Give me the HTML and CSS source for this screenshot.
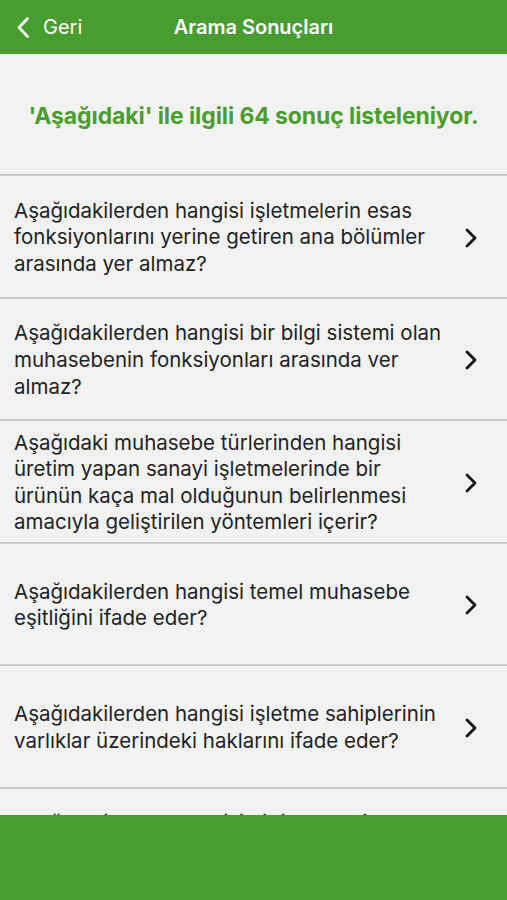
FILE: index.html
```html
<!DOCTYPE html>
<html lang="tr">
<head>
<meta charset="utf-8">
<title>Arama Sonuçları</title>
<link rel="stylesheet" href="styles.css">
</head>
<body>
<div class="screen">
  <header class="navbar">
    <a class="back">
      <svg class="back-icon" viewBox="0 0 12 21" width="12" height="21"><path d="M10.5 1.5 L2 10.5 L10.5 19.5" fill="none" stroke="#fff" stroke-width="2.6" stroke-linecap="round" stroke-linejoin="round"/></svg>
      <span>Geri</span>
    </a>
    <h1 class="title">Arama Sonuçları</h1>
  </header>
  <main class="content">
    <div class="banner">'Aşağıdaki' ile ilgili 64 sonuç listeleniyor.</div>
    <ul class="list">
      <li class="row"><p class="q">Aşağıdakilerden hangisi işletmelerin esas fonksiyonlarını yerine getiren ana bölümler arasında yer almaz?</p><svg class="chev" viewBox="0 0 12 20" width="12" height="20"><path d="M2 2 L10 10 L2 18" fill="none" stroke="#111" stroke-width="2.8" stroke-linecap="round" stroke-linejoin="round"/></svg></li>
      <li class="row"><p class="q">Aşağıdakilerden hangisi bir bilgi sistemi olan muhasebenin fonksiyonları arasında ver almaz?</p><svg class="chev" viewBox="0 0 12 20" width="12" height="20"><path d="M2 2 L10 10 L2 18" fill="none" stroke="#111" stroke-width="2.8" stroke-linecap="round" stroke-linejoin="round"/></svg></li>
      <li class="row"><p class="q">Aşağıdaki muhasebe türlerinden hangisi üretim yapan sanayi işletmelerinde bir ürünün kaça mal olduğunun belirlenmesi amacıyla geliştirilen yöntemleri içerir?</p><svg class="chev" viewBox="0 0 12 20" width="12" height="20"><path d="M2 2 L10 10 L2 18" fill="none" stroke="#111" stroke-width="2.8" stroke-linecap="round" stroke-linejoin="round"/></svg></li>
      <li class="row"><p class="q">Aşağıdakilerden hangisi temel muhasebe eşitliğini ifade eder?</p><svg class="chev" viewBox="0 0 12 20" width="12" height="20"><path d="M2 2 L10 10 L2 18" fill="none" stroke="#111" stroke-width="2.8" stroke-linecap="round" stroke-linejoin="round"/></svg></li>
      <li class="row"><p class="q">Aşağıdakilerden hangisi işletme sahiplerinin varlıklar üzerindeki haklarını ifade eder?</p><svg class="chev" viewBox="0 0 12 20" width="12" height="20"><path d="M2 2 L10 10 L2 18" fill="none" stroke="#111" stroke-width="2.8" stroke-linecap="round" stroke-linejoin="round"/></svg></li>
      <li class="row"><p class="q">Aşağıdakilerden hangisi bir işletmenin tekdüzen hesap planında yer alan hesap sınıflarından biri değildir?</p><svg class="chev" viewBox="0 0 12 20" width="12" height="20"><path d="M2 2 L10 10 L2 18" fill="none" stroke="#111" stroke-width="2.8" stroke-linecap="round" stroke-linejoin="round"/></svg></li>
    </ul>
  </main>
  <footer class="tabbar"></footer>
</div>
</body>
</html>
```

FILE: styles.css
```css
* { box-sizing: border-box; }
html, body { margin: 0; padding: 0; }
body {
  font-family: "Inter", "Liberation Sans", Arial, sans-serif;
  background: #f2f2f2;
}
.screen {
  width: 507px;
  height: 900px;
  display: flex;
  flex-direction: column;
  overflow: hidden;
}
.navbar {
  height: 54px;
  flex: 0 0 54px;
  background: #499c30;
  display: flex;
  align-items: center;
  position: relative;
  color: #fff;
}
.back {
  display: flex;
  align-items: center;
  gap: 14px;
  padding-left: 17px;
  font-size: 20px;
  color: #fff;
}
.back-icon { display: block; }
.title {
  position: absolute;
  left: 0;
  right: 0;
  top: 0;
  height: 54px;
  line-height: 54px;
  margin: 0;
  text-align: center;
  font-size: 20px;
  font-weight: 600;
  pointer-events: none;
}
.content {
  flex: 1 1 auto;
  overflow: hidden;
}
.banner {
  height: 122px;
  border-bottom: 2px solid #c9c9c9;
  display: flex;
  align-items: center;
  justify-content: center;
  padding-top: 4px;
  color: #4a9e2f;
  font-weight: 700;
  font-size: 23px;
  letter-spacing: -0.1px;
}
.list { list-style: none; margin: 0; padding: 0; }
.row {
  height: 122.5px;
  border-bottom: 2px solid #cccccc;
  display: flex;
  align-items: center;
  padding: 3px 30px 0 14px;
}
.q {
  flex: 1;
  margin: 0;
  font-size: 20.5px;
  line-height: 26.6px;
  color: #222222;
  padding-right: 14px;
}
.chev { flex: 0 0 auto; display: block; }
.tabbar {
  flex: 0 0 85px;
  height: 85px;
  background: #499c30;
}
```
